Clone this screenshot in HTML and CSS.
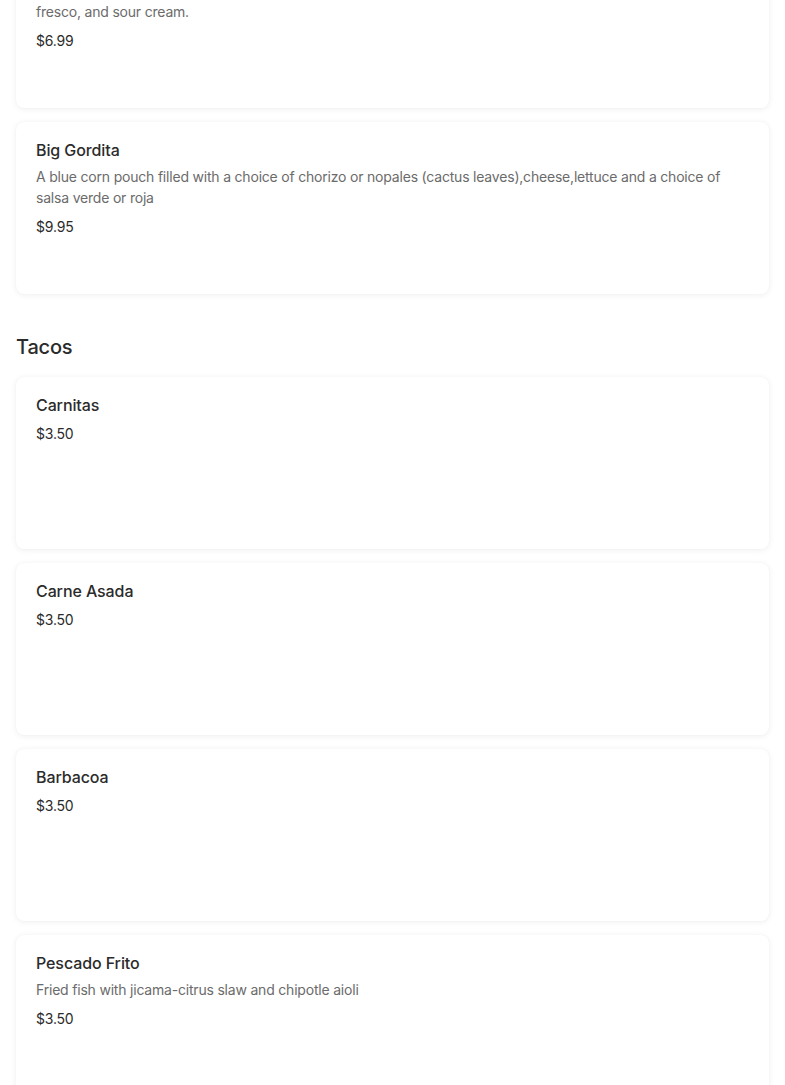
FILE: index.html
```html
<!DOCTYPE html>
<html lang="en">
<head>
<meta charset="utf-8">
<title>Menu</title>
<link rel="stylesheet" href="styles.css">
</head>
<body>
<main class="menu">
  <section class="category category--continued">
    <div class="items">
      <article class="item">
        <h3 class="item-name">Tostada</h3>
        <p class="item-desc">A crispy corn tortilla topped with refried beans, your choice of meat, lettuce, salsa, queso<br>fresco, and sour cream.</p>
        <p class="item-price">$6.99</p>
      </article>
      <article class="item">
        <h3 class="item-name">Big Gordita</h3>
        <p class="item-desc">A blue corn pouch filled with a choice of chorizo or nopales (cactus leaves),cheese,lettuce and a choice of salsa verde or roja</p>
        <p class="item-price">$9.95</p>
      </article>
    </div>
  </section>
  <section class="category">
    <h2 class="category-title">Tacos</h2>
    <div class="items">
      <article class="item">
        <h3 class="item-name">Carnitas</h3>
        <p class="item-price">$3.50</p>
      </article>
      <article class="item">
        <h3 class="item-name">Carne Asada</h3>
        <p class="item-price">$3.50</p>
      </article>
      <article class="item">
        <h3 class="item-name">Barbacoa</h3>
        <p class="item-price">$3.50</p>
      </article>
      <article class="item">
        <h3 class="item-name">Pescado Frito</h3>
        <p class="item-desc">Fried fish with jicama-citrus slaw and chipotle aioli</p>
        <p class="item-price">$3.50</p>
      </article>
    </div>
  </section>
</main>
</body>
</html>
```

FILE: styles.css
```css
* { box-sizing: border-box; }
html, body { margin: 0; padding: 0; background: #ffffff; }
body {
  font-family: Inter, "Noto Sans", "Liberation Sans", sans-serif;
  color: #2b2b2b;
}
.menu {
  padding: 0 16px;
  display: flex;
  flex-direction: column;
  gap: 40px;
}
.category--continued { margin-top: -64px; }
.category-title {
  margin: 0 0 17px;
  font-size: 20px;
  line-height: 26px;
  font-weight: 500;
  letter-spacing: -0.2px;
  color: #2b2b2b;
}
.items {
  display: flex;
  flex-direction: column;
  gap: 14px;
}
.item {
  background: #fff;
  border-radius: 8px;
  box-shadow: 0 1px 6px rgba(0,0,0,0.07), 0 0 1px rgba(0,0,0,0.05);
  min-height: 172px;
  padding: 16px 20px;
}
.item-name {
  margin: 0;
  font-size: 16px;
  line-height: 25px;
  font-weight: 500;
  letter-spacing: -0.1px;
  color: #2b2b2b;
}
.item-desc {
  margin: 3px 0 0;
  font-size: 14px;
  line-height: 21px;
  letter-spacing: -0.2px;
  color: #6b6b6b;
}
.item-price {
  margin: 6px 0 0;
  font-size: 14px;
  line-height: 20px;
  letter-spacing: -0.2px;
  color: #2b2b2b;
}
.item-desc + .item-price { margin-top: 9px; }
```
